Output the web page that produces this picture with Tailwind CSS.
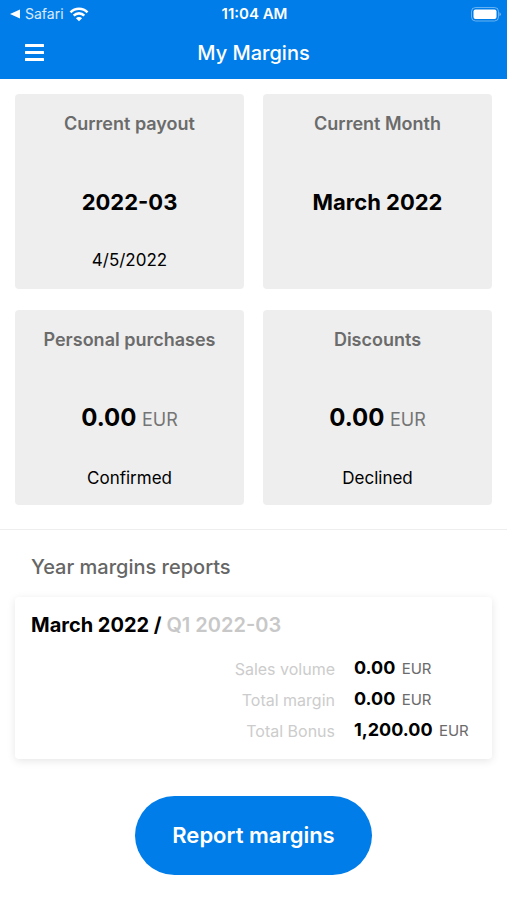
<!DOCTYPE html>
<html lang="en">
  <head>
    <meta charset="UTF-8" />
    <meta name="viewport" content="width=device-width, initial-scale=1.0" />
    <title>My Margins</title>
    <script src="https://cdn.jsdelivr.net/npm/@tailwindcss/browser@4"></script>
  </head>
  <body class="bg-white text-black font-[Inter,sans-serif]">
    <!-- Header -->
    <header class="bg-[#007de8] text-white">
      <div class="grid grid-cols-3 items-center h-7 pl-2 pr-[6px]">
        <div class="flex items-center pl-[2px]">
          <a href="#" class="flex items-center gap-1 text-sm text-white/85">
            <svg class="w-[11px] h-[10px]" viewBox="0 0 11 10" fill="#fff">
              <path d="M0 5 10 0.500V9.500z" />
            </svg>
            Safari
          </a>
          <svg class="w-5 h-4 ml-[5px]" viewBox="0 0 20 16" fill="none" stroke="#fff" stroke-width="2.600">
            <path d="M1.500 6.300a12 12 0 0 1 17 0" />
            <path d="M4.700 9.600a7.500 7.500 0 0 1 10.600 0" />
            <path d="M10 15.300 6.900 12.200a4.400 4.400 0 0 1 6.200 0z" fill="#fff" stroke="none" />
          </svg>
        </div>
        <p class="text-center text-[15px] leading-5 font-semibold">11:04 AM</p>
        <svg class="justify-self-end w-[30px] h-[15px]" viewBox="0 0 30 15" fill="none">
          <rect x="0.500" y="0.500" width="27" height="13.500" rx="4" stroke="#fff" stroke-opacity="0.400" />
          <rect x="2.500" y="2.500" width="23" height="9.500" rx="2" fill="#fff" />
          <path d="M28.500 5.300a2.200 2.200 0 0 1 0 4z" fill="#fff" fill-opacity="0.500" />
        </svg>
      </div>
      <nav class="grid grid-cols-[40px_1fr_40px] items-center h-[51px] px-[14px] pb-[2px]">
        <button type="button" class="flex items-center justify-center h-10 w-10" aria-label="Menu">
          <svg class="w-[19px] h-[17px]" viewBox="0 0 19 17" fill="#fff">
            <rect y="0" width="19" height="3" rx="0.500" />
            <rect y="7" width="19" height="3" rx="0.500" />
            <rect y="14" width="19" height="3" rx="0.500" />
          </svg>
        </button>
        <h1 class="text-center text-xl font-medium">My Margins</h1>
      </nav>
    </header>

    <main>
      <!-- Summary cards -->
      <section class="grid grid-cols-2 gap-x-[19px] gap-y-[21px] px-[15px] pt-[15px] pb-6 border-b border-[#eeeeee] text-center">
        <article class="bg-[#eeeeee] rounded min-h-[195px] pt-4">
          <h2 class="text-lg leading-7 font-semibold text-[#6b6b6b]">Current payout</h2>
          <p class="mt-12 text-[22px] leading-8 font-bold">2022-03</p>
          <p class="mt-[30px] text-[17px] leading-6">4/5/2022</p>
        </article>
        <article class="bg-[#eeeeee] rounded min-h-[195px] pt-4">
          <h2 class="text-lg leading-7 font-semibold text-[#6b6b6b]">Current Month</h2>
          <p class="mt-12 text-[22px] leading-8 font-bold">March 2022</p>
        </article>
        <article class="bg-[#eeeeee] rounded min-h-[195px] pt-4">
          <h2 class="text-lg leading-7 font-semibold text-[#6b6b6b]">Personal purchases</h2>
          <p class="mt-12 text-2xl leading-8 font-bold">0.00 <span class="text-lg leading-8 font-normal text-[#757575]">EUR</span></p>
          <p class="mt-[30px] text-[17px] leading-6">Confirmed</p>
        </article>
        <article class="bg-[#eeeeee] rounded min-h-[195px] pt-4">
          <h2 class="text-lg leading-7 font-semibold text-[#6b6b6b]">Discounts</h2>
          <p class="mt-12 text-2xl leading-8 font-bold">0.00 <span class="text-lg leading-8 font-normal text-[#757575]">EUR</span></p>
          <p class="mt-[30px] text-[17px] leading-6">Declined</p>
        </article>
      </section>

      <!-- Reports -->
      <section class="px-[15px] pt-[23px]">
        <h2 class="px-4 text-xl leading-7 font-medium text-[#666666]">Year margins reports</h2>
        <article class="mt-4 px-4 pt-[14px] pb-[13px] rounded bg-white shadow-[0_2px_8px_rgba(0,0,0,0.1)]">
          <h3 class="text-xl leading-7 font-bold">March 2022 / <span class="font-semibold text-[#c8c8c8]">Q1 2022-03</span></h3>
          <table class="mt-[14px] w-full">
            <tbody>
              <tr class="h-[31px]">
                <th scope="row" class="p-0 pr-[19px] text-right text-base font-normal text-[#cccccc]">Sales volume</th>
                <td class="p-0 w-[122px] text-lg leading-7 font-bold whitespace-nowrap">0.00 <span class="ml-[2px] text-[15px] font-normal text-[#6b6b6b]">EUR</span></td>
              </tr>
              <tr class="h-[31px]">
                <th scope="row" class="p-0 pr-[19px] text-right text-base font-normal text-[#cccccc]">Total margin</th>
                <td class="p-0 w-[122px] text-lg leading-7 font-bold whitespace-nowrap">0.00 <span class="ml-[2px] text-[15px] font-normal text-[#6b6b6b]">EUR</span></td>
              </tr>
              <tr class="h-[31px]">
                <th scope="row" class="p-0 pr-[19px] text-right text-base font-normal text-[#cccccc]">Total Bonus</th>
                <td class="p-0 w-[122px] text-lg leading-7 font-bold whitespace-nowrap">1,200.00 <span class="ml-[2px] text-[15px] font-normal text-[#6b6b6b]">EUR</span></td>
              </tr>
            </tbody>
          </table>
        </article>
      </section>

      <div class="flex justify-center pt-[37px] pb-6">
        <button type="button" class="rounded-full bg-[#007de8] px-[37px] py-6 text-[22px] leading-[31px] font-semibold text-white">Report margins</button>
      </div>
    </main>
  </body>
</html>
